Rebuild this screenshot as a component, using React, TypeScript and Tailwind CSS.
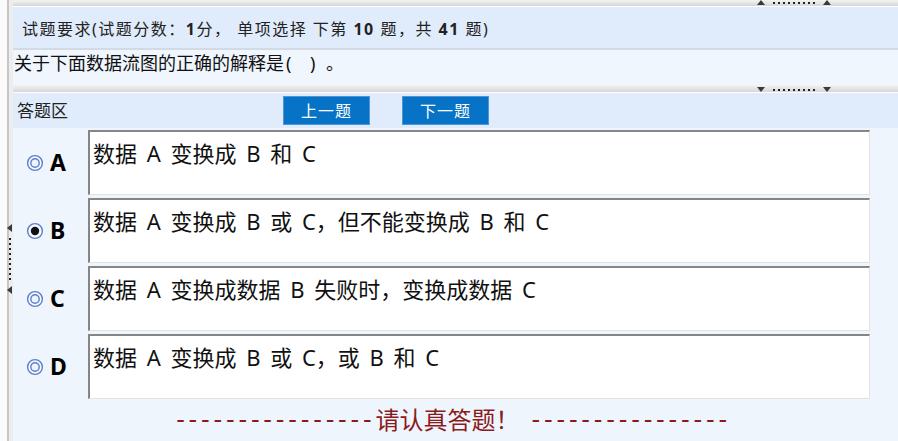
import React from "react";

const OPTIONS = [
  { key: "A", text: "数据 A 变换成 B 和 C" },
  { key: "B", text: "数据 A 变换成 B 或 C，但不能变换成 B 和 C", checked: true },
  { key: "C", text: "数据 A 变换成数据 B 失败时，变换成数据 C" },
  { key: "D", text: "数据 A 变换成 B 或 C，或 B 和 C" },
];

const Radio = ({ checked = false }: { checked?: boolean }) => (
  <svg width="18" height="18" viewBox="0 0 18 18">
    <circle cx="9" cy="9" r="7.4" fill="#f6f8fd" stroke="#5b7ecb" strokeWidth="1.4" />
    {checked ? (
      <circle cx="9" cy="9" r="4.2" fill="#111111" />
    ) : (
      <circle cx="9" cy="9" r="4.2" fill="#eef3fc" stroke="#5b7ecb" strokeWidth="1.4" />
    )}
  </svg>
);

// dotted grip used on the splitters
const Dots = ({ vertical = false }: { vertical?: boolean }) => (
  <div className={vertical ? "flex flex-col gap-[3px]" : "flex gap-[3px]"}>
    {Array.from({ length: 9 }).map((_, i) => (
      <div key={i} className="w-[2px] h-[2px] bg-[#222]" />
    ))}
  </div>
);

const Arrow = ({ dir }: { dir: "up" | "down" | "left" }) => {
  const pts = dir === "up" ? "0,5 4,0 8,5" : dir === "down" ? "0,0 8,0 4,5" : "5,0 5,8 0,4";
  const w = dir === "left" ? 5 : 8;
  const h = dir === "left" ? 8 : 5;
  return (
    <svg width={w} height={h} viewBox={`0 0 ${w} ${h}`}>
      <polygon points={pts} fill="#3a3a3a" />
    </svg>
  );
};

export default function App() {
  return (
    <div className="w-[898px] h-[441px] flex overflow-hidden bg-white font-[family-name:'Noto_Sans','Noto_Sans_CJK_SC',sans-serif] text-[#111]">
      {/* left splitter */}
      <div className="relative flex h-full w-[13px] shrink-0">
        <div className="w-[7px] bg-[#fbfbfb]" />
        <div className="w-[2px] bg-[#c6c6c6]" />
        <div className="w-[4px] bg-[#ededed]" />
        <div className="absolute left-[7px] top-[224px] flex flex-col items-center gap-[6px]">
          <Arrow dir="left" />
          <Dots vertical />
          <Arrow dir="left" />
        </div>
      </div>

      <div className="flex-1 flex flex-col min-w-0">
        {/* top splitter */}
        <div className="relative h-[6px] bg-gradient-to-b from-[#f4f4f4] to-[#d6d6d6]">
          <div className="absolute left-[744px] top-0 flex items-center gap-[8px]">
            <Arrow dir="up" />
            <Dots />
            <Arrow dir="up" />
          </div>
        </div>
        <div className="h-px bg-white" />

        {/* requirement header */}
        <div className="h-[41px] bg-[#e0ebfb] flex items-center pl-[9px] pt-[3px] text-[16px] text-[#222] tracking-[1.5px] whitespace-pre">
          试题要求(试题分数：<b>1</b>分， 单项选择 下第 <b>10</b> 题，共 <b>41</b> 题)
        </div>
        <div className="h-[2px] bg-[#d3dae3]" />

        {/* question */}
        <div className="h-[35px] bg-[#eff6fe] pl-[1px] pt-[1px] text-[18px] leading-[24px] whitespace-pre flex items-start">
          <span>关于下面数据流图的正确的解释是</span>
          <span className="inline-block w-[26px] pl-[2px]">(</span>
          <span className="inline-block w-[16px]">)</span>
          <span>。</span>
        </div>

        {/* middle splitter */}
        <div className="relative h-[7px] bg-gradient-to-b from-[#f4f4f4] to-[#d6d6d6]">
          <div className="absolute left-[744px] top-[2px] flex items-center gap-[8px]">
            <Arrow dir="down" />
            <Dots />
            <Arrow dir="down" />
          </div>
        </div>
        <div className="h-px bg-white" />

        {/* answer bar */}
        <div className="h-[35px] bg-[#e0ebfb] flex items-center">
          <div className="w-[270px] pl-[4px] text-[17px] text-[#222]">答题区</div>
          <button className="w-[87px] h-[29px] bg-[#0673c7] border border-[#4b97da] text-white text-[16px] tracking-[1px] leading-none">
            上一题
          </button>
          <button className="ml-[32px] w-[87px] h-[29px] bg-[#0673c7] border border-[#4b97da] text-white text-[16px] tracking-[1px] leading-none">
            下一题
          </button>
        </div>

        {/* options */}
        <div className="flex-1 flex flex-col bg-[#eef5fd] pt-[2px] pr-[28px]">
          <div className="flex flex-col gap-[3px]">
            {OPTIONS.map((o) => (
              <div key={o.key} className="flex items-center h-[65px]">
                <div className="w-[75px] flex items-center pl-[13px] gap-[6px]">
                  <Radio checked={o.checked} />
                  <span className="text-[23px] font-bold text-black leading-none">{o.key}</span>
                </div>
                <div className="flex-1 h-full bg-white border-t-2 border-l-2 border-t-[#858585] border-l-[#858585] border-r border-b border-r-[#e2e2e2] border-b-[#e2e2e2] pl-[3px] pt-[6px] text-[22px] leading-[30px] [word-spacing:4px] whitespace-pre">
                  {o.text}
                </div>
              </div>
            ))}
          </div>
          <div className="flex-1 flex items-center justify-center pl-[24px] text-[24px] text-[#8b1a1a] whitespace-pre">
            <span className="font-[family-name:'DejaVu_Sans',sans-serif] tracking-[3.8px]">----------------</span>
            请认真答题！
            <span className="ml-[12px] font-[family-name:'DejaVu_Sans',sans-serif] tracking-[3.8px]">----------------</span>
          </div>
        </div>
      </div>
    </div>
  );
}
